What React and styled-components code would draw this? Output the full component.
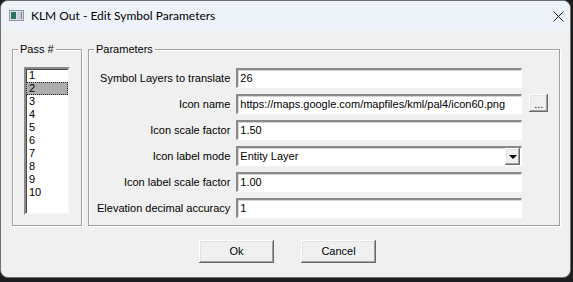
import React from 'react'
import styled, { createGlobalStyle } from 'styled-components'

const GlobalStyle = createGlobalStyle`
  html, body {
    margin: 0;
    background: #1d1d1f;
  }
  body {
    font-family: "Liberation Sans", Arial, sans-serif;
    font-size: 11px;
    color: #000;
  }
`

const Window = styled.div`
  width: 569px;
  height: 276px;
  background: #f0f0f0;
  border: 1px solid #6f6f6f;
  border-radius: 8px;
  overflow: hidden;
  display: flex;
  flex-direction: column;
`

const TitleBar = styled.div`
  height: 29px;
  flex: none;
  display: flex;
  align-items: center;
  padding-left: 8px;
  background: #eef3f9;
  font-family: Lato, "Noto Sans", sans-serif;
  font-size: 12px;
`

const Title = styled.span`
  margin-left: 7px;
  line-height: 16px;
  margin-top: 1px;
`

const CloseButton = styled.div`
  margin-left: auto;
  width: 24px;
  height: 29px;
  display: flex;
  align-items: center;
  justify-content: center;
  padding-top: 2px;
`

const Body = styled.div`
  display: flex;
  gap: 6px;
  padding: 13px 10px 0 11px;
`

const GroupBox = styled.fieldset`
  margin: 0;
  padding: 0;
  min-width: 0;
  border: 1px solid #a0a0a0;
  box-shadow: inset 1px 1px 0 #fff, 1px 1px 0 #fff;
  flex: ${p => (p.$grow ? 1 : 'none')};
`

const Legend = styled.legend`
  margin-left: 5px;
  padding: 0 2px;
  line-height: 13px;
`

const GroupContent = styled.div`
  padding: ${p => p.$pad};
`

const ListBox = styled.div`
  width: 42px;
  height: 144px;
  background: #fff;
  border-style: solid;
  border-width: 2px;
  border-color: #8a8a8a #f4f4f4 #f4f4f4 #8a8a8a;
  box-shadow: inset 1px 1px 0 #4a4a4a;
`

const ListItem = styled.div`
  height: 13px;
  line-height: 13px;
  padding-left: 3px;
  background: ${p => (p.$selected ? '#adadad' : 'transparent')};
  outline: ${p => (p.$selected ? '1px dotted #202020' : 'none')};
  outline-offset: -1px;
`

const ParamGrid = styled.div`
  display: grid;
  grid-template-columns: 1fr 286px 19px;
  grid-auto-rows: 20px;
  column-gap: 7px;
  row-gap: 6px;
`

const Label = styled.div`
  align-self: center;
  text-align: right;
  white-space: nowrap;
  margin-right: -1px;
`

const Field = styled.div`
  box-sizing: border-box;
  height: 20px;
  background: #fff;
  border-style: solid;
  border-width: 2px 1px 1px 2px;
  border-color: #8a8a8a #ffffff #ffffff #8a8a8a;
  box-shadow: inset 1px 1px 0 #d4d4d4;
  padding: 0 2px;
  line-height: 16px;
  white-space: nowrap;
  overflow: hidden;
`

const Combo = styled(Field)`
  display: flex;
  align-items: stretch;
  padding-right: 1px;
`

const ComboText = styled.span`
  flex: 1;
`

const raised = `
  background: #f0f0f0;
  box-shadow:
    inset -1px -1px 0 #696969,
    inset 1px 1px 0 #ffffff,
    inset -2px -2px 0 #a0a0a0,
    inset 2px 2px 0 #e3e3e3;
`

const DropButton = styled.div`
  ${raised}
  width: 15px;
  display: flex;
  align-items: center;
  justify-content: center;
`

const Triangle = styled.span`
  width: 0;
  height: 0;
  border-left: 4px solid transparent;
  border-right: 4px solid transparent;
  border-top: 4px solid #000;
  margin-top: 1px;
`

const Ellipsis = styled.div`
  ${raised}
  height: 18px;
  line-height: 20px;
  text-align: center;
  box-sizing: border-box;
`

const ButtonRow = styled.div`
  display: flex;
  justify-content: center;
  gap: 27px;
  padding-left: 4px;
  margin-top: 14px;
`

const Button = styled.div`
  ${raised}
  width: 75px;
  height: 23px;
  line-height: 23px;
  text-align: center;
`

const AppIcon = () => (
  <svg width="15" height="11" viewBox="0 0 15 11">
    <rect x="0.5" y="0.5" width="14" height="10" fill="#dfe4e8" stroke="#8c9399" />
    <rect x="2" y="2" width="5" height="7" fill="#2f6f6a" />
    <rect x="8" y="2" width="5" height="7" fill="#c9d0d6" />
    <rect x="12" y="2" width="1" height="7" fill="#6b7a86" />
  </svg>
)

const CloseIcon = () => (
  <svg width="11" height="11" viewBox="0 0 11 11">
    <path d="M0.5 0.5 L10.5 10.5 M10.5 0.5 L0.5 10.5" stroke="#1a1a1a" strokeWidth="1" />
  </svg>
)

const passes = ['1', '2', '3', '4', '5', '6', '7', '8', '9', '10']

export default function App() {
  return (
    <>
      <GlobalStyle />
      <Window>
        <TitleBar>
          <AppIcon />
          <Title>KLM Out - Edit Symbol Parameters</Title>
          <CloseButton>
            <CloseIcon />
          </CloseButton>
        </TitleBar>
        <Body>
          <GroupBox>
            <Legend>Pass #</Legend>
            <GroupContent $pad="11px 11px 10px 11px">
              <ListBox>
                {passes.map(p => (
                  <ListItem key={p} $selected={p === '2'}>{p}</ListItem>
                ))}
              </ListBox>
            </GroupContent>
          </GroupBox>
          <GroupBox $grow>
            <Legend>Parameters</Legend>
            <GroupContent $pad="12px 12px 7px 8px">
              <ParamGrid>
                <Label>Symbol Layers to translate</Label>
                <Field>26</Field>
                <span />
                <Label>Icon name</Label>
                <Field>https://maps.google.com/mapfiles/kml/pal4/icon60.png</Field>
                <Ellipsis>...</Ellipsis>
                <Label>Icon scale factor</Label>
                <Field>1.50</Field>
                <span />
                <Label>Icon label mode</Label>
                <Combo>
                  <ComboText>Entity Layer</ComboText>
                  <DropButton><Triangle /></DropButton>
                </Combo>
                <span />
                <Label>Icon label scale factor</Label>
                <Field>1.00</Field>
                <span />
                <Label>Elevation decimal accuracy</Label>
                <Field>1</Field>
                <span />
              </ParamGrid>
            </GroupContent>
          </GroupBox>
        </Body>
        <ButtonRow>
          <Button>Ok</Button>
          <Button>Cancel</Button>
        </ButtonRow>
      </Window>
    </>
  )
}
